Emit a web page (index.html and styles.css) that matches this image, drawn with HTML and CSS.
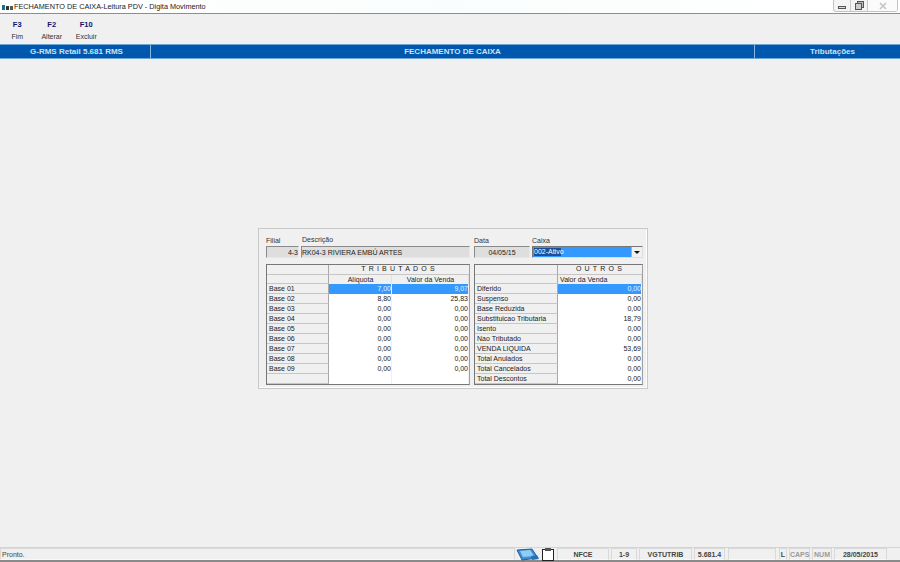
FILE: index.html
```html
<!DOCTYPE html>
<html lang="en">
<head>
    <meta charset="UTF-8">
    <meta name="viewport" content="width=device-width, initial-scale=1.0">
    <title>Fechamento de Caixa</title>
    <link rel="stylesheet" href="styles.css">
</head>
<body>

    <!-- Title bar -->
    <div class="title-bar">
        <svg class="app-icon" width="11" height="8" viewBox="0 0 11 8"><rect x="0" y="2" width="3" height="5" fill="#1c6f8c"/><rect x="4" y="3" width="3" height="4" fill="#333"/><rect x="8" y="3" width="3" height="4" fill="#555"/></svg>
        <span class="title-text">FECHAMENTO DE CAIXA-Leitura PDV - Digita Movimento</span>
        <div class="win-buttons">
            <div class="win-btn"><svg width="8" height="8" viewBox="0 0 8 8"><rect x="0.5" y="4.5" width="7" height="2" fill="#ddd" stroke="#555"/></svg></div>
            <div class="win-btn"><svg width="9" height="9" viewBox="0 0 9 9"><rect x="2.5" y="0.5" width="6" height="6" fill="#bbb" stroke="#555"/><rect x="0.5" y="2.5" width="6" height="6" fill="#ccc" stroke="#555"/></svg></div>
            <div class="win-btn win-close"><svg width="8" height="8" viewBox="0 0 8 8"><path d="M1 1l6 6M7 1l-6 6" stroke="#c4c4c4" stroke-width="1.6"/></svg></div>
        </div>
    </div>

    <!-- Toolbar -->
    <div class="toolbar">
        <div class="tool"><b>F3</b><span>Fim</span></div>
        <div class="tool"><b>F2</b><span>Alterar</span></div>
        <div class="tool"><b>F10</b><span>Excluir</span></div>
    </div>

    <!-- Blue header -->
    <div class="header-bar">
        <div class="header-cell header-left">G-RMS Retail 5.681 RMS</div>
        <div class="header-cell header-mid">FECHAMENTO DE CAIXA</div>
        <div class="header-cell header-right">Tributações</div>
    </div>

    <!-- Main area -->
    <div class="main">
        <div class="panel">
            <div class="fields">
                <div class="field f-filial"><label>Filial</label><div class="input right">4-3</div></div>
                <div class="field f-desc"><label>Descrição</label><div class="input">RK04-3 RIVIERA EMBÚ ARTES</div></div>
                <div class="field f-data"><label>Data</label><div class="input center">04/05/15</div></div>
                <div class="field f-caixa">
                    <label>Caixa</label>
                    <div class="select">
                        <div class="select-value"><span>002-Ativo</span></div>
                        <div class="select-arrow"></div>
                    </div>
                </div>
            </div>

            <div class="tables">
                <div class="grid grid-left">
                    <div class="cell lbl"></div><div class="cell caption span2">TRIBUTADOS</div>
                    <div class="cell lbl"></div><div class="cell head">Alíquota</div><div class="cell head">Valor da Venda</div>
                    <div class="cell lbl">Base 01</div><div class="cell num sel">7,00</div><div class="cell num sel">9,07</div>
                    <div class="cell lbl">Base 02</div><div class="cell num">8,80</div><div class="cell num">25,83</div>
                    <div class="cell lbl">Base 03</div><div class="cell num">0,00</div><div class="cell num">0,00</div>
                    <div class="cell lbl">Base 04</div><div class="cell num">0,00</div><div class="cell num">0,00</div>
                    <div class="cell lbl">Base 05</div><div class="cell num">0,00</div><div class="cell num">0,00</div>
                    <div class="cell lbl">Base 06</div><div class="cell num">0,00</div><div class="cell num">0,00</div>
                    <div class="cell lbl">Base 07</div><div class="cell num">0,00</div><div class="cell num">0,00</div>
                    <div class="cell lbl">Base 08</div><div class="cell num">0,00</div><div class="cell num">0,00</div>
                    <div class="cell lbl">Base 09</div><div class="cell num">0,00</div><div class="cell num">0,00</div>
                    <div class="cell lbl"></div><div class="cell num"></div><div class="cell num"></div>
                </div>

                <div class="grid grid-right">
                    <div class="cell lbl"></div><div class="cell caption">OUTROS</div>
                    <div class="cell lbl"></div><div class="cell head head-left">Valor da Venda</div>
                    <div class="cell lbl">Diferido</div><div class="cell num sel">0,00</div>
                    <div class="cell lbl">Suspenso</div><div class="cell num">0,00</div>
                    <div class="cell lbl">Base Reduzida</div><div class="cell num">0,00</div>
                    <div class="cell lbl">Substituicao Tributaria</div><div class="cell num">18,79</div>
                    <div class="cell lbl">Isento</div><div class="cell num">0,00</div>
                    <div class="cell lbl">Nao Tributado</div><div class="cell num">0,00</div>
                    <div class="cell lbl">VENDA LIQUIDA</div><div class="cell num">53,69</div>
                    <div class="cell lbl">Total Anulados</div><div class="cell num">0,00</div>
                    <div class="cell lbl">Total Cancelados</div><div class="cell num">0,00</div>
                    <div class="cell lbl">Total Descontos</div><div class="cell num">0,00</div>
                </div>
            </div>
        </div>
    </div>

    <!-- Status bar -->
    <div class="status-bar">
        <div class="st st-msg">Pronto.</div>
        <div class="st-icon">
            <svg width="24" height="13" viewBox="0 0 24 13"><path d="M1 2l15-1 6 9-16 2z" fill="#3f8fd6" stroke="#1f5f9e"/><path d="M4 3l10-1 4 6-11 1z" fill="#8fcdf2"/><path d="M15 8l6-1 2 4-7 1z" fill="#2a6fb5"/></svg>
        </div>
        <div class="st-icon st-clip">
            <svg width="12" height="13" viewBox="0 0 12 13"><rect x="0.5" y="1.5" width="11" height="11" fill="#fff" stroke="#222"/><rect x="3" y="0" width="6" height="3" fill="#555"/></svg>
        </div>
        <div class="st st-nfce">NFCE</div>
        <div class="st st-pos">1-9</div>
        <div class="st st-prog">VGTUTRIB</div>
        <div class="st st-ver">5.681.4</div>
        <div class="st st-empty"></div>
        <div class="st st-l">L</div>
        <div class="st st-caps off">CAPS</div>
        <div class="st st-num off">NUM</div>
        <div class="st st-date">28/05/2015</div>
    </div>

</body>
</html>
```

FILE: styles.css
```css
* {
    box-sizing: border-box;
}

html,
body {
    height: 100%;
}

body {
    margin: 0;
    width: 900px;
    height: 562px;
    overflow: hidden;
    display: flex;
    flex-direction: column;
    background: #f0f0f0;
    color: #222222;
    font-family: 'Liberation Sans', Arial, sans-serif;
    font-size: 7px;
}

/* Title bar */
.title-bar {
    height: 14px;
    flex: none;
    display: flex;
    align-items: center;
    background: linear-gradient(90deg, #ffffff, #fafdfd 50%, #ffffff);
    border-bottom: 1px solid #8e8e8e;
    padding-left: 2px;
}

.app-icon {
    margin-right: 1px;
}

.title-text {
    color: #222222;
    font-size: 7.3px;
}

.win-buttons {
    margin-left: auto;
    margin-right: 2px;
    height: 12px;
    align-self: flex-start;
    display: flex;
    border: 1px solid #c4c4c4;
    border-top: none;
    border-radius: 0 0 3px 3px;
    background: #f4f4f4;
}

.win-btn {
    width: 17px;
    display: flex;
    align-items: center;
    justify-content: center;
    border-right: 1px solid #c9c9c9;
}

.win-close {
    width: 29px;
    border-right: none;
    background: #fbfbfb;
}

/* Toolbar */
.toolbar {
    height: 30px;
    flex: none;
    display: flex;
    padding-top: 6px;
}

.tool {
    width: 34.5px;
    display: flex;
    flex-direction: column;
    align-items: center;
    gap: 3px;
    line-height: 9px;
}

.tool b {
    color: #12126e;
    font-size: 7.5px;
}

.tool span {
    font-size: 7px;
    color: #333333;
}

/* Blue header */
.header-bar {
    height: 15px;
    flex: none;
    display: flex;
    background: #0058ae;
    border-top: 1px solid #6fa6d8;
    border-bottom: 1px solid #6fa6d8;
    color: #cfe0f0;
    font-weight: bold;
    font-size: 8px;
}

.header-cell {
    display: flex;
    align-items: center;
    justify-content: center;
}

.header-left {
    width: 151px;
    padding-left: 3px;
    border-right: 1px solid #8ab6de;
}

.header-mid {
    width: 603px;
}

.header-right {
    flex: 1;
    padding-left: 10px;
    border-left: 1px solid #8ab6de;
}

/* Main */
.main {
    flex: 1;
    padding: 169px 0 0 258px;
}

.panel {
    width: 390px;
    height: 161px;
    background: #f0f0f0;
    border: 1px solid #c8c8c8;
    box-shadow: inset -1px -1px 0 #ffffff;
    padding: 6px 4px 0 7px;
}

.fields {
    display: flex;
    height: 27px;
}

.field label {
    display: block;
    height: 11px;
    line-height: 11px;
    color: #333333;
}

.f-filial {
    flex: none;
    width: 35px;
}

.f-desc {
    flex: none;
    width: 169px;
    margin-right: 4px;
}

.f-desc label {
    margin: -1px 0 1px 1px;
}

.f-data {
    flex: none;
    width: 58px;
}

.f-caixa {
    flex: none;
    width: 111px;
}

.input {
    height: 12px;
    line-height: 11px;
    background: #dedede;
    border: 1px solid;
    border-color: #8a8a8a #e8e8e8 #e8e8e8 #8a8a8a;
    white-space: nowrap;
}

.f-filial .input {
    width: 33px;
}

.f-data .input {
    width: 56px;
}

.input.right {
    text-align: right;
}

.input.center {
    text-align: center;
}

.select {
    height: 12px;
    display: flex;
    background: #ffffff;
    border: 1px solid;
    border-color: #777777 #dddddd #dddddd #777777;
}

.select-value {
    flex: 1;
    background: #3399ff;
    padding: 1px;
}

.select-value span {
    display: block;
    height: 8px;
    line-height: 8px;
    color: #ffffff;
    background: #1a4f9c;
    width: 27px;
    white-space: nowrap;
}

.select-arrow {
    width: 11px;
    position: relative;
    background: #f0f0f0;
    border-left: 1px solid #b0b0b0;
}

.select-arrow::after {
    content: '';
    position: absolute;
    left: 2px;
    top: 4px;
    border-left: 3px solid transparent;
    border-right: 3px solid transparent;
    border-top: 3px solid #111111;
}

.tables {
    display: flex;
    gap: 4px;
    margin-top: 2px;
}

.grid {
    display: grid;
    grid-auto-rows: 10px;
    height: 121px;
    background: #ffffff;
    border: 1px solid;
    border-color: #777777 #a0a0a0 #777777 #777777;
    align-content: start;
}

.grid-left {
    flex: none;
    width: 204px;
    grid-template-columns: 62px 63px 77px;
    grid-template-rows: 10px 9px;
}

.grid-right {
    flex: none;
    width: 169px;
    grid-template-columns: 83px 84px;
    grid-template-rows: 10px 9px;
}

.cell {
    line-height: 9px;
    padding: 0 1px 0 2px;
    white-space: nowrap;
    overflow: hidden;
}

.lbl {
    background: #f0f0f0;
    border-bottom: 1px solid #c6c6c6;
    border-right: 1px solid #a8a8a8;
}

.caption {
    background: #f0f0f0;
    border-bottom: 1px solid #c6c6c6;
    text-align: center;
    letter-spacing: 3.2px;
    line-height: 8px;
}

.span2 {
    grid-column: span 2;
}

.head {
    background: #f0f0f0;
    border-right: 1px solid #e0e0e0;
    text-align: center;
}

.head-left {
    text-align: left;
}

.num {
    background: #ffffff;
    text-align: right;
    border-right: 1px solid #f0f0f0;
    padding-right: 0;
}

.sel {
    background: #3399ff;
    color: #e6f2ff;
}

/* Status bar */
.status-bar {
    height: 15px;
    flex: none;
    display: flex;
    align-items: flex-start;
    background: #f0f0f0;
    border-top: 1px solid #d4d4d4;
    border-bottom: 2px solid #8a8a8a;
    font-size: 7px;
}

.st {
    flex: none;
    height: 12px;
    line-height: 12px;
    text-align: center;
    color: #444444;
    font-weight: bold;
    border: 1px solid;
    border-color: #d9d9d9 #d9d9d9 #f8f8f8 #d9d9d9;
    margin-right: 2px;
}

.st-msg {
    width: 515px;
    margin-right: 1px;
    text-align: left;
    padding-left: 1px;
    font-weight: normal;
}

.st-icon {
    flex: none;
    width: 23px;
    height: 13px;
    overflow: hidden;
}

.st-clip {
    width: 18px;
    padding-left: 3px;
}

.st-nfce {
    width: 52px;
}

.st-pos {
    width: 26px;
}

.st-prog {
    width: 53px;
}

.st-ver {
    width: 31px;
    margin-right: 3px;
}

.st-empty {
    width: 48px;
    margin-right: 3px;
}

.st-l {
    width: 8px;
}

.st-caps {
    width: 21px;
}

.st-num {
    width: 20px;
}

.st-date {
    width: 53px;
}

.off {
    color: #9a9a9a;
}
```
